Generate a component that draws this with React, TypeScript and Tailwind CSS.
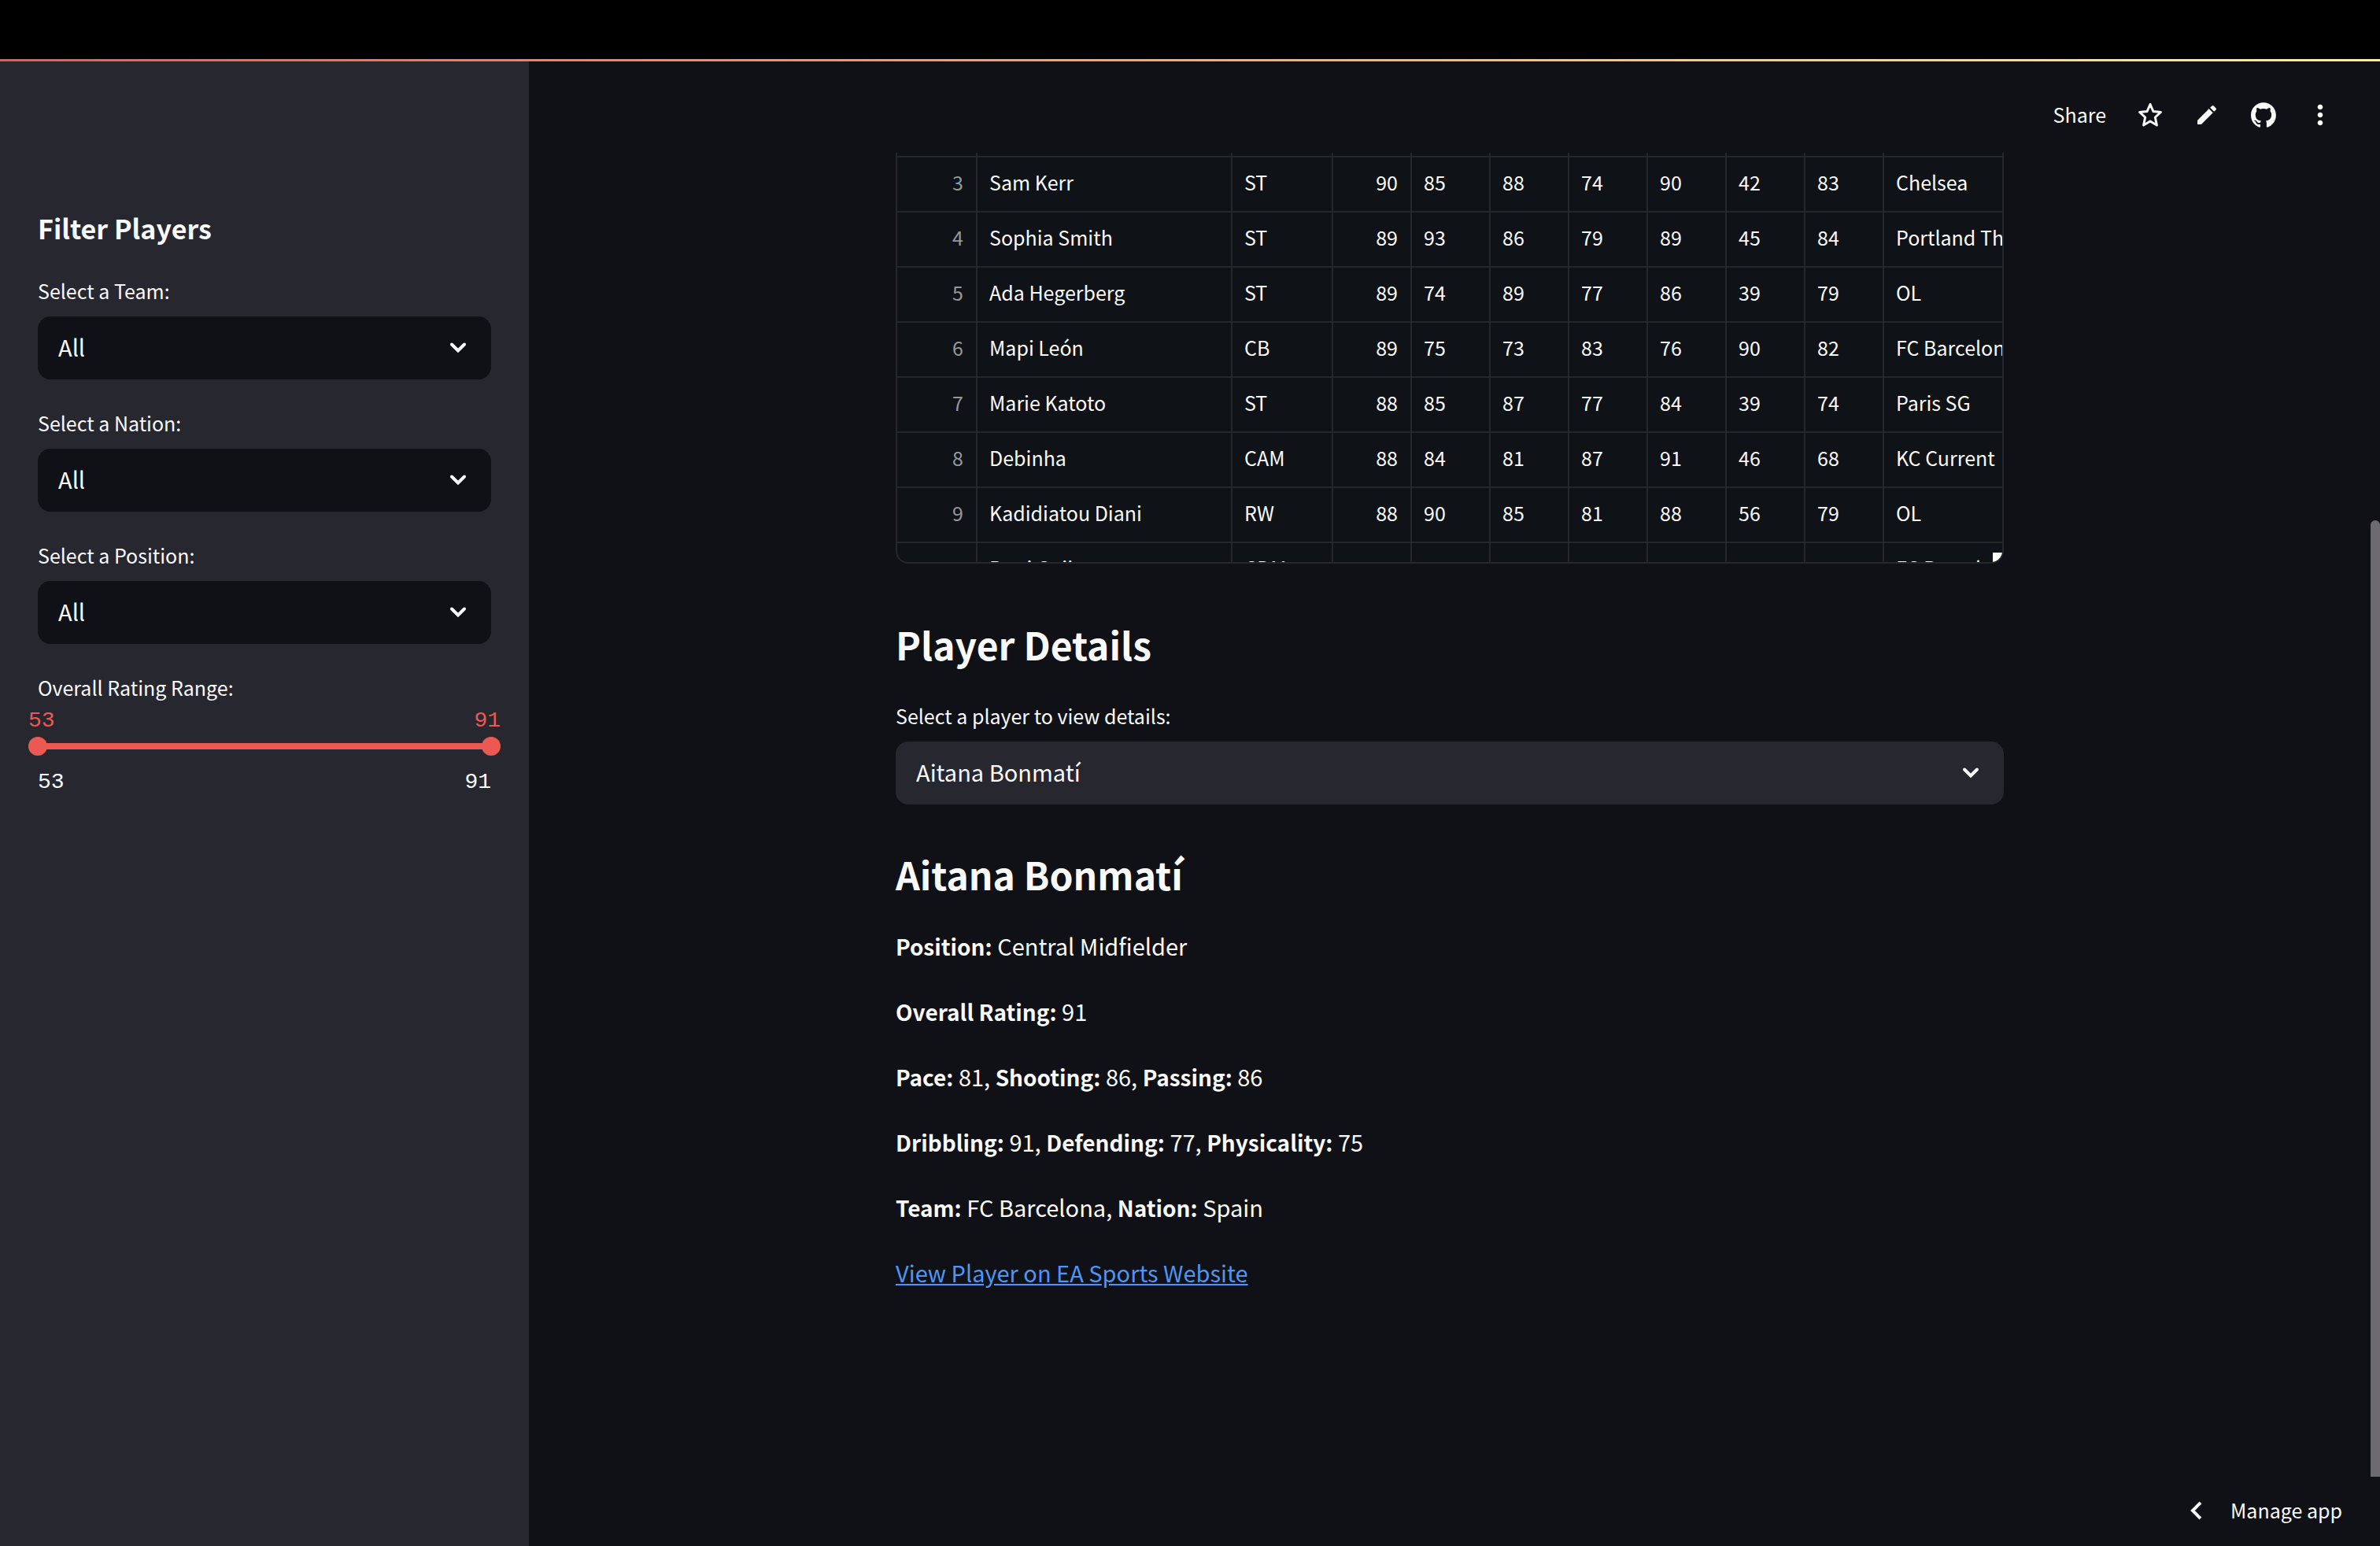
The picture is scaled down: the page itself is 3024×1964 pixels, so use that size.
import { useState } from "react";
import { MdEdit, MdMoreVert } from "react-icons/md";

type Player = { index: number; name: string; pos: string; ovr: number; stats: number[]; team: string };

const players: Player[] = [
  { index: 3, name: "Sam Kerr", pos: "ST", ovr: 90, stats: [85, 88, 74, 90, 42, 83], team: "Chelsea" },
  { index: 4, name: "Sophia Smith", pos: "ST", ovr: 89, stats: [93, 86, 79, 89, 45, 84], team: "Portland Thorns" },
  { index: 5, name: "Ada Hegerberg", pos: "ST", ovr: 89, stats: [74, 89, 77, 86, 39, 79], team: "OL" },
  { index: 6, name: "Mapi León", pos: "CB", ovr: 89, stats: [75, 73, 83, 76, 90, 82], team: "FC Barcelona" },
  { index: 7, name: "Marie Katoto", pos: "ST", ovr: 88, stats: [85, 87, 77, 84, 39, 74], team: "Paris SG" },
  { index: 8, name: "Debinha", pos: "CAM", ovr: 88, stats: [84, 81, 87, 91, 46, 68], team: "KC Current" },
  { index: 9, name: "Kadidiatou Diani", pos: "RW", ovr: 88, stats: [90, 85, 81, 88, 56, 79], team: "OL" },
  { index: 10, name: "Patri Guijarro", pos: "CDM", ovr: 88, stats: [68, 76, 86, 86, 85, 80], team: "FC Barcelona" },
];

const details: [string, string][][] = [
  [["Position", "Central Midfielder"]],
  [["Overall Rating", "91"]],
  [["Pace", "81"], ["Shooting", "86"], ["Passing", "86"]],
  [["Dribbling", "91"], ["Defending", "77"], ["Physicality", "75"]],
  [["Team", "FC Barcelona"], ["Nation", "Spain"]],
];

function SelectBox({ id, label, value, tone }: { id: string; label: string; value: string; tone: string }) {
  return (
    <div>
      <label htmlFor={id} className="mb-[10px] block text-[25px] leading-[46px]">{label}</label>
      <div className="relative">
        <select id={id} className={`block h-20 w-full appearance-none rounded-2xl pr-20 pb-0.5 pl-[26px] text-[29px] ${tone}`}>
          <option>{value}</option>
        </select>
        <svg viewBox="0 0 20 14" className="pointer-events-none absolute top-[33px] right-8 h-[14px] w-5" fill="none" stroke="currentColor" strokeWidth="4" strokeLinecap="round" aria-hidden="true">
          <path d="M2 2.5 10 10.5 18 2.5" />
        </svg>
      </div>
    </div>
  );
}

const rangeInput =
  "pointer-events-none absolute inset-0 h-6 w-full appearance-none bg-transparent [&::-webkit-slider-thumb]:pointer-events-auto [&::-webkit-slider-thumb]:size-6 [&::-webkit-slider-thumb]:appearance-none [&::-webkit-slider-thumb]:rounded-full [&::-webkit-slider-thumb]:bg-[#ec5953]";

function RatingRange() {
  const [low, setLow] = useState(53);
  const [high, setHigh] = useState(91);
  return (
    <fieldset className="min-w-0">
      <legend className="text-[25px] leading-[46px]">Overall Rating Range:</legend>
      <div className="-mx-3 pt-1 font-['Liberation_Mono',monospace] text-[28px] leading-8">
        <div className="flex justify-between text-[#ec5953]">
          <span>{low}</span>
          <span>{high}</span>
        </div>
        <div className="relative mt-1 flex h-6 items-center px-3">
          <div className="h-2 w-full bg-[#ec5953]" />
          <input type="range" aria-label="Minimum rating" min={53} max={91} value={low} onChange={(e) => setLow(Math.min(+e.target.value, high))} className={rangeInput} />
          <input type="range" aria-label="Maximum rating" min={53} max={91} value={high} onChange={(e) => setHigh(Math.max(+e.target.value, low))} className={rangeInput} />
        </div>
        <div className="mt-[18px] flex justify-between px-3">
          <span>53</span>
          <span>91</span>
        </div>
      </div>
    </fieldset>
  );
}

const cell = "overflow-hidden border-r-2 border-b-2 border-[#26272b] pt-0 pr-4 pb-1 pl-[15px]";

function PlayerTable() {
  return (
    <div className="relative h-[522px] overflow-hidden rounded-b-2xl border-2 border-t-0 border-[#26272b] bg-[#0f1217]">
      <table className="w-full table-fixed border-separate border-spacing-0 text-[25px] whitespace-nowrap">
        <colgroup>
          <col className="w-[102px]" />
          <col className="w-[324px]" />
          <col className="w-[128px]" />
          {Array.from({ length: 7 }, (_, i) => (
            <col key={i} className="w-[100px]" />
          ))}
          <col />
        </colgroup>
        <tbody>
          <tr className="h-[6px]">
            {Array.from({ length: 11 }, (_, i) => (
              <td key={i} className="border-r-2 border-b-2 border-[#26272b] p-0 last:border-r-0" />
            ))}
          </tr>
          {players.map((p) => (
            <tr key={p.index} className="h-[70px]">
              <td className={`${cell} text-right text-[#97989b]`}>{p.index}</td>
              <td className={cell}>{p.name}</td>
              <td className={cell}>{p.pos}</td>
              <td className={`${cell} text-right`}>{p.ovr}</td>
              {p.stats.map((s, i) => (
                <td key={i} className={cell}>{s}</td>
              ))}
              <td className="overflow-hidden border-b-2 border-[#26272b] pt-0 pr-0 pb-1 pl-[15px]">{p.team}</td>
            </tr>
          ))}
        </tbody>
      </table>
      <div className="absolute right-0 bottom-0 size-3 bg-white" />
    </div>
  );
}

const iconButton = "grid size-10 place-items-center";

export default function App() {
  return (
    <div className="flex h-screen flex-col overflow-hidden bg-black font-['Noto_Sans_CJK_SC',sans-serif] text-[#fafafa]">
      <div className="mt-[75px] h-[3px] shrink-0 bg-linear-to-r from-[#ec5953] to-[#fdf08a]" />
      <div className="relative flex min-h-0 flex-1 bg-[#101116]">
        <aside className="w-[672px] shrink-0 bg-[#27272f] px-12 pt-[188px]">
          <h2 className="mb-8 text-[34px] leading-12 font-bold">Filter Players</h2>
          <div className="flex flex-col gap-8">
            <SelectBox id="team" label="Select a Team:" value="All" tone="bg-[#101116]" />
            <SelectBox id="nation" label="Select a Nation:" value="All" tone="bg-[#101116]" />
            <SelectBox id="position" label="Select a Position:" value="All" tone="bg-[#101116]" />
            <RatingRange />
          </div>
        </aside>

        <div className="flex min-w-0 flex-1 flex-col pr-3">
          <header className="flex h-[116px] shrink-0 items-center justify-end pt-5 pr-[44px]">
            <button className="mr-9 text-[25px]">Share</button>
            <div className="flex gap-8">
              <button aria-label="Favorite" className={iconButton}>
                <svg viewBox="0 0 32 32" className="size-8" fill="none" stroke="currentColor" strokeWidth="3" strokeLinejoin="round" aria-hidden="true">
                  <path d="M16 2.5 19.9 11.5 29.5 12.5 22.3 19 24.4 29 16 24 7.6 29 9.7 19 2.5 12.5 12.1 11.5Z" />
                </svg>
              </button>
              <button aria-label="Edit" className={iconButton}><MdEdit className="size-8" /></button>
              <button aria-label="View source on GitHub" className={iconButton}>
                <svg viewBox="0 0 98 96" className="size-8" fill="currentColor" aria-hidden="true">
                  <path d="M48.854 0C21.839 0 0 22 0 49.217c0 21.756 13.993 40.172 33.405 46.69 2.427.49 3.316-1.059 3.316-2.362 0-1.141-.08-5.052-.08-9.127-13.59 2.934-16.42-5.867-16.42-5.867-2.184-5.704-5.42-7.17-5.42-7.17-4.448-3.015.324-3.015.324-3.015 4.934.326 7.523 5.052 7.523 5.052 4.367 7.496 11.404 5.378 14.235 4.074.404-3.178 1.699-5.378 3.074-6.6-10.839-1.141-22.243-5.378-22.243-24.283 0-5.378 1.94-9.778 5.014-13.2-.485-1.222-2.184-6.275.486-13.038 0 0 4.125-1.304 13.426 5.052a46.97 46.97 0 0 1 12.214-1.63c4.125 0 8.33.571 12.213 1.63 9.302-6.356 13.427-5.052 13.427-5.052 2.67 6.763.97 11.816.485 13.038 3.155 3.422 5.015 7.822 5.015 13.2 0 18.905-11.404 23.06-22.324 24.283 1.78 1.548 3.316 4.481 3.316 9.126 0 6.6-.08 11.897-.08 13.526 0 1.304.89 2.853 3.316 2.364 19.412-6.52 33.405-24.935 33.405-46.691C97.707 22 75.788 0 48.854 0z" />
                </svg>
              </button>
              <button aria-label="More options" className={iconButton}><MdMoreVert className="size-10" /></button>
            </div>
          </header>

          <main className="mx-auto w-full max-w-[1408px]">
            <PlayerTable />
            <h2 className="mt-[69px] mb-[34px] text-[48px] leading-[67px] font-bold">Player Details</h2>
            <SelectBox id="player" label="Select a player to view details:" value="Aitana Bonmatí" tone="bg-[#27272f]" />
            <h2 className="mt-[55px] mb-8 text-[48px] leading-[67px] font-bold">Aitana Bonmatí</h2>
            <div className="flex flex-col gap-8 text-[29px] leading-[51px]">
              {details.map((line, i) => (
                <p key={i}>
                  {line.map(([k, v], j) => (
                    <span key={k}>
                      {j > 0 && ", "}
                      <strong className="text-[28px] leading-none font-bold">{k}:</strong> {v}
                    </span>
                  ))}
                </p>
              ))}
              <p>
                <a href="#player" className="text-[#4d96f3] underline">View Player on EA Sports Website</a>
              </p>
            </div>
          </main>
        </div>

        <div className="absolute top-[583px] right-0 bottom-[88px] w-3 rounded-t-full bg-[#6c6c70]" />
        <button className="absolute right-0 bottom-0 flex h-[88px] items-center gap-9 pr-12 pb-0.5 pl-8 text-[25px]">
          <svg viewBox="0 0 16 24" className="h-6 w-4" fill="none" stroke="currentColor" strokeWidth="4" aria-hidden="true">
            <path d="M14 2 4 12 14 22" />
          </svg>
          Manage app
        </button>
      </div>
    </div>
  );
}
